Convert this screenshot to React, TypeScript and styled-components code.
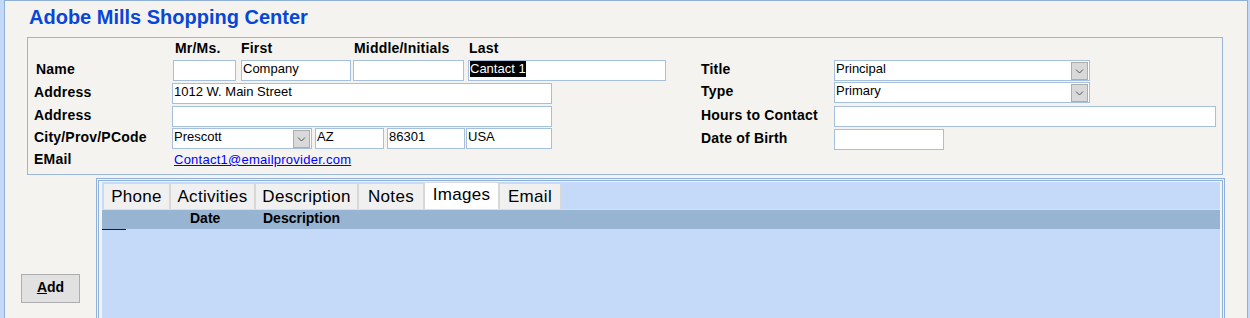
import React from "react";
import styled, { createGlobalStyle } from "styled-components";

const GlobalStyle = createGlobalStyle`
  html, body {
    margin: 0;
    padding: 0;
    background: #c4d9f7;
    overflow: hidden;
  }
  body {
    font-family: "Liberation Sans", Arial, sans-serif;
  }
`;

const Page = styled.div`
  width: 1250px;
  padding-left: 4px;
  box-sizing: border-box;
`;

const Window = styled.div`
  width: 1244px;
  height: 330px;
  box-sizing: border-box;
  border: 1px solid #8eb0d9;
  background: #f4f3ef;
`;

const Heading = styled.h1`
  margin: 0;
  padding: 5px 0 0 24px;
  font: bold 20px/23px "Liberation Sans", Arial, sans-serif;
  color: #0746d8;
`;

const GroupBox = styled.div`
  display: flex;
  margin: 8px 0 0 22px;
  width: 1196px;
  height: 138px;
  box-sizing: border-box;
  border: 1px solid #9ab6d8;
`;

const Column = styled.div<{ $w?: number; $pl?: number }>`
  display: flex;
  flex-direction: column;
  width: ${(p) => (p.$w ? `${p.$w}px` : "auto")};
  padding-left: ${(p) => p.$pl ?? 0}px;
  box-sizing: border-box;
`;

const HeaderRow = styled.div`
  display: flex;
  align-items: flex-end;
  height: 22px;
  padding: 0 0 4px 138px;
  box-sizing: border-box;
`;

const ColHead = styled.div<{ $w: number; $pl: number }>`
  width: ${(p) => p.$w}px;
  padding-left: ${(p) => p.$pl}px;
  box-sizing: border-box;
  font: bold 14px/16px "Liberation Sans", Arial, sans-serif;
  letter-spacing: 0.2px;
  color: #000;
  white-space: nowrap;
`;

const Row = styled.div<{ $h: number }>`
  display: flex;
  align-items: flex-start;
  height: ${(p) => p.$h}px;
`;

const Label = styled.div<{ $w: number; $indent?: number }>`
  width: ${(p) => p.$w}px;
  flex: none;
  padding: 1px 0 0 ${(p) => p.$indent ?? 0}px;
  box-sizing: border-box;
  font: bold 14px/16px "Liberation Sans", Arial, sans-serif;
  letter-spacing: 0.2px;
  color: #000;
  white-space: nowrap;
`;

const Field = styled.div<{ $w: number; $ml?: number }>`
  display: flex;
  align-items: center;
  flex: none;
  width: ${(p) => p.$w}px;
  height: 21px;
  margin-left: ${(p) => p.$ml ?? 0}px;
  padding: 0 1px 3px 1px;
  box-sizing: border-box;
  border: 1px solid #a5bfdc;
  background: #fff;
  font: 13px/16px "Liberation Sans", Arial, sans-serif;
  color: #000;
  white-space: nowrap;
  overflow: hidden;
`;

const Selected = styled.span`
  display: inline-block;
  background: #000;
  color: #fff;
  line-height: 16px;
`;

const ComboBox = styled(Field)`
  padding: 0 1px 0 1px;
  justify-content: space-between;
`;

const ComboText = styled.span`
  padding-bottom: 3px;
  line-height: 16px;
`;

const DropButton = styled.div`
  display: flex;
  align-items: center;
  justify-content: center;
  width: 17px;
  height: 18px;
  box-sizing: border-box;
  border: 1px solid #acacac;
  background: #d9d9d9;
`;

const EmailLink = styled.a`
  margin-left: 2px;
  padding-top: 2px;
  font: 13px/16px "Liberation Sans", Arial, sans-serif;
  letter-spacing: 0.25px;
  color: #0000ff;
  text-decoration: underline;
`;

const Bottom = styled.div`
  display: flex;
  margin-top: 3px;
`;

const Side = styled.div`
  width: 91px;
  flex: none;
  padding: 96px 0 0 16px;
  box-sizing: border-box;
`;

const AddButton = styled.button`
  width: 59px;
  height: 29px;
  padding: 0 0 3px 0;
  border: 1px solid #adadad;
  background: #e1e1e1;
  font: bold 14px/16px "Liberation Sans", Arial, sans-serif;
  color: #000;

  u {
    text-decoration: underline;
  }
`;

const Panel = styled.div`
  width: 1129px;
  height: 150px;
  box-sizing: border-box;
  border: 3px double #8eb0d9;
  border-bottom: none;
  padding: 1px 2px 0 3px;
`;

const PanelBody = styled.div`
  height: 100%;
  background: #c4daf8;
`;

const TabStrip = styled.div`
  display: flex;
  align-items: flex-end;
  height: 27px;
  padding-left: 1px;
`;

const Tab = styled.div<{ $w: number; $active?: boolean }>`
  width: ${(p) => p.$w}px;
  height: ${(p) => (p.$active ? 27 : 26)}px;
  box-sizing: border-box;
  border: 1px solid #d8d8d8;
  border-bottom: none;
  padding-top: ${(p) => (p.$active ? 0 : 1)}px;
  background: ${(p) => (p.$active ? "#ffffff" : "#f0f0f0")};
  font: 17px/24px "Liberation Sans", Arial, sans-serif;
  letter-spacing: 0.3px;
  text-align: center;
  color: #000;
`;

const GridHeader = styled.div`
  display: flex;
  height: 20px;
  box-sizing: border-box;
  border-top: 1px solid #d7e1ec;
  background: #98b4d3;
  font: bold 14px/17px "Liberation Sans", Arial, sans-serif;
  color: #000;
`;

const GridCol = styled.div<{ $w?: number }>`
  width: ${(p) => (p.$w ? `${p.$w}px` : "auto")};
  flex: none;
`;

const RowMarker = styled.div`
  width: 24px;
  height: 1px;
  background: #1e1e1e;
`;

function Chevron() {
  return (
    <svg width="9" height="6" viewBox="0 0 9 6">
      <path d="M1 1.5 L4.5 5 L8 1.5" fill="none" stroke="#555" strokeWidth="1" />
    </svg>
  );
}

function Combo({ w, ml, value }: { w: number; ml?: number; value: string }) {
  return (
    <ComboBox $w={w} $ml={ml}>
      <ComboText>{value}</ComboText>
      <DropButton>
        <Chevron />
      </DropButton>
    </ComboBox>
  );
}

const tabs = [
  { name: "Phone", w: 67 },
  { name: "Activities", w: 85 },
  { name: "Description", w: 103 },
  { name: "Notes", w: 66 },
  { name: "Images", w: 75, active: true },
  { name: "Email", w: 62 },
];

export default function App() {
  return (
    <Page>
      <GlobalStyle />
      <Window>
        <Heading>Adobe Mills Shopping Center</Heading>
        <GroupBox>
          <Column $w={673} $pl={6}>
            <HeaderRow>
              <ColHead $w={69} $pl={3}>Mr/Ms.</ColHead>
              <ColHead $w={112} $pl={0}>First</ColHead>
              <ColHead $w={115} $pl={1}>Middle/Initials</ColHead>
              <ColHead $w={100} $pl={1}>Last</ColHead>
            </HeaderRow>
            <Row $h={23}>
              <Label $w={138} $indent={2}>Name</Label>
              <Field $w={63} $ml={1} />
              <Field $w={110} $ml={5}>Company</Field>
              <Field $w={111} $ml={2} />
              <Field $w={198} $ml={4}>
                <Selected>Cantact 1</Selected>
              </Field>
            </Row>
            <Row $h={23}>
              <Label $w={138}>Address</Label>
              <Field $w={380}>1012 W. Main Street</Field>
            </Row>
            <Row $h={22}>
              <Label $w={138}>Address</Label>
              <Field $w={380} />
            </Row>
            <Row $h={22}>
              <Label $w={138}>City/Prov/PCode</Label>
              <Combo w={140} value="Prescott" />
              <Field $w={69} $ml={3}>AZ</Field>
              <Field $w={78} $ml={3}>86301</Field>
              <Field $w={86} $ml={1}>USA</Field>
            </Row>
            <Row $h={20}>
              <Label $w={138}>EMail</Label>
              <EmailLink href="#">Contact1@emailprovider.com</EmailLink>
            </Row>
          </Column>
          <Column>
            <HeaderRow />
            <Row $h={22}>
              <Label $w={133}>Title</Label>
              <Combo w={256} value="Principal" />
            </Row>
            <Row $h={24}>
              <Label $w={133}>Type</Label>
              <Combo w={256} value="Primary" />
            </Row>
            <Row $h={23}>
              <Label $w={133}>Hours to Contact</Label>
              <Field $w={382} />
            </Row>
            <Row $h={22}>
              <Label $w={133}>Date of Birth</Label>
              <Field $w={110} />
            </Row>
          </Column>
        </GroupBox>
        <Bottom>
          <Side>
            <AddButton>
              <u>A</u>dd
            </AddButton>
          </Side>
          <Panel>
            <PanelBody>
              <TabStrip>
                {tabs.map((t) => (
                  <Tab key={t.name} $w={t.w} $active={t.active}>
                    {t.name}
                  </Tab>
                ))}
              </TabStrip>
              <GridHeader>
                <GridCol $w={88} />
                <GridCol $w={73}>Date</GridCol>
                <GridCol>Description</GridCol>
              </GridHeader>
              <RowMarker />
            </PanelBody>
          </Panel>
        </Bottom>
      </Window>
    </Page>
  );
}
